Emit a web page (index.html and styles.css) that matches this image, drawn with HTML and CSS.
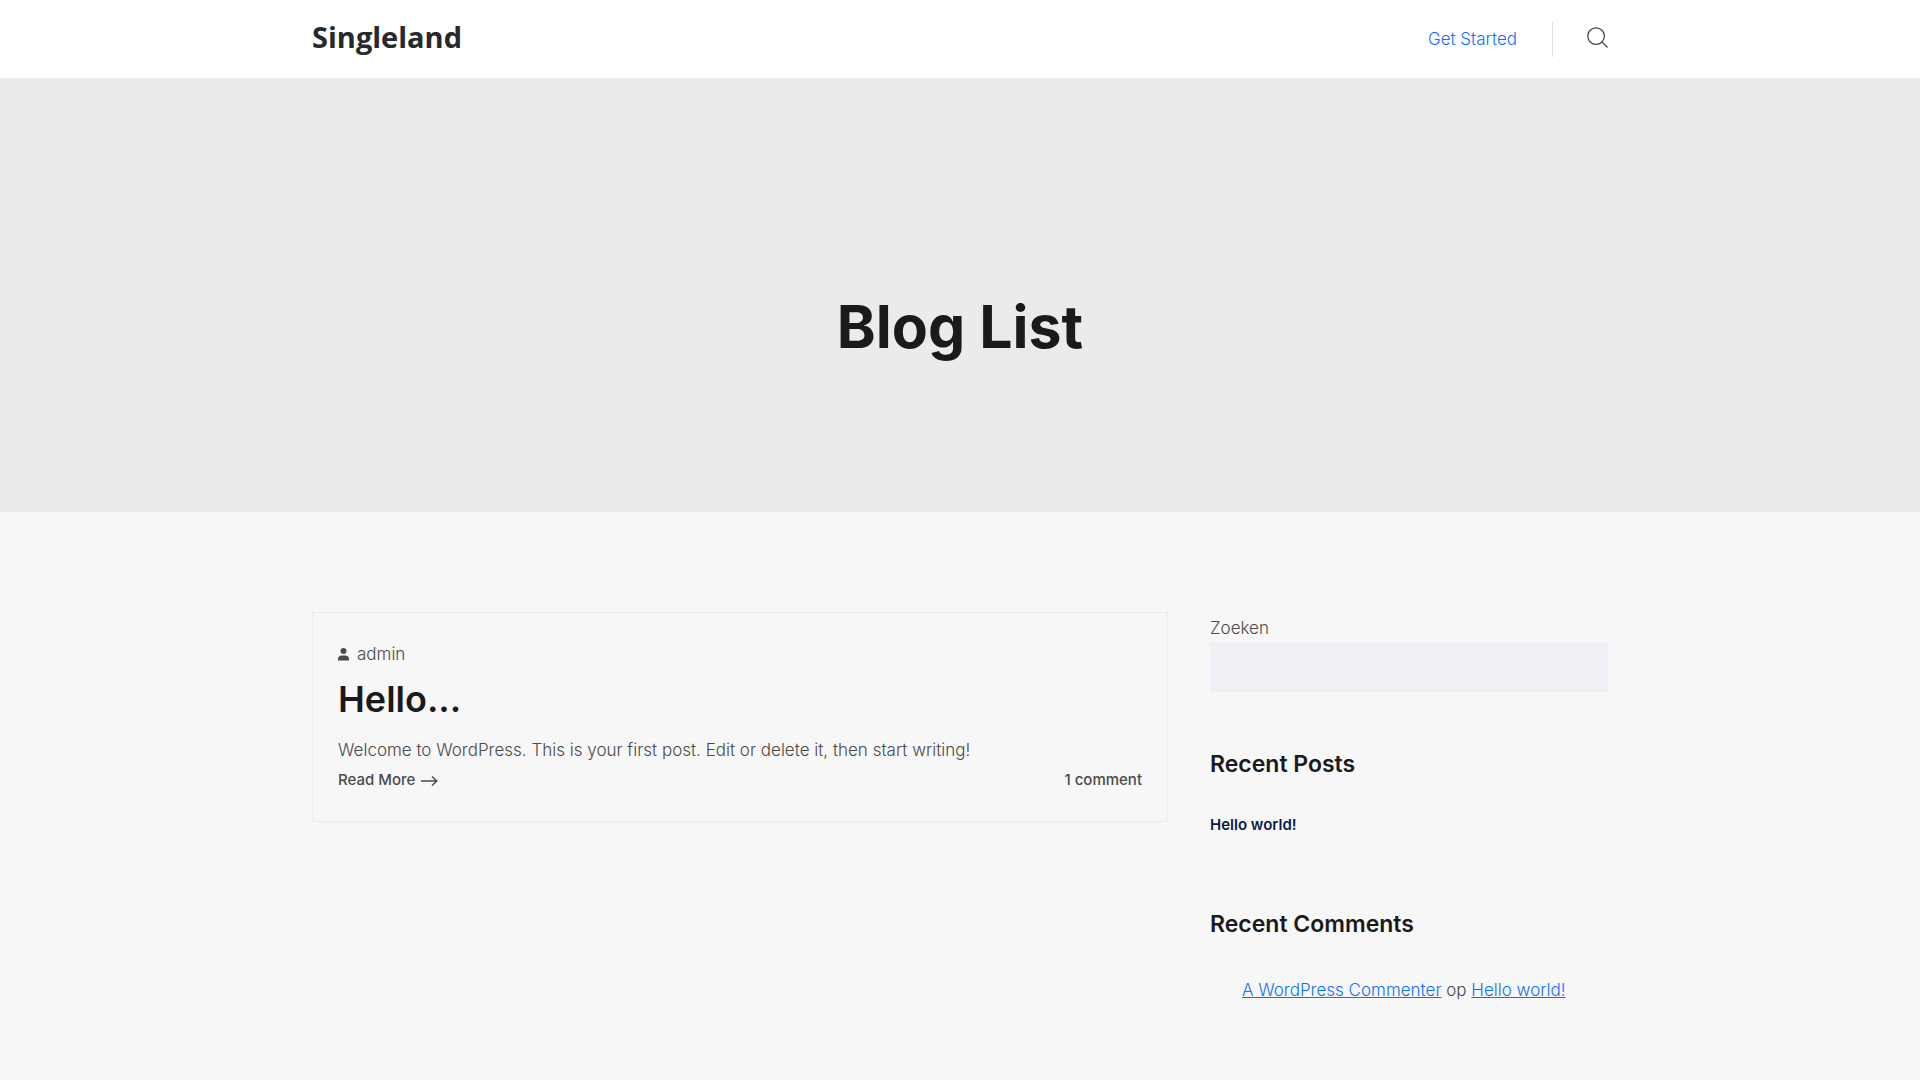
FILE: index.html
```html
<!DOCTYPE html>
<html lang="nl">
<head>
<meta charset="utf-8">
<meta name="viewport" content="width=device-width, initial-scale=1">
<title>Blog List – Singleland</title>
<link rel="stylesheet" href="styles.css">
</head>
<body>
<header class="site-header">
  <div class="container header-row">
    <a class="logo" href="#">Singleland</a>
    <nav class="header-nav">
      <a class="get-started" href="#">Get Started</a>
      <button class="search-toggle" type="button" aria-label="Search">
        <svg class="search-icon" viewBox="0 0 22 22" fill="none" stroke="currentColor" stroke-width="1.3" aria-hidden="true"><circle cx="9.5" cy="9.5" r="8.7"/><path d="M15.6 15.6 21.500 21.500"/></svg>
      </button>
    </nav>
  </div>
</header>
<section class="banner">
  <h1 class="banner-title">Blog List</h1>
</section>
<main class="container content">
  <article class="post">
    <p class="post-author">
      <svg class="user-icon" viewBox="0 0 11 13" fill="currentColor" aria-hidden="true"><circle cx="5.5" cy="3" r="3"/><path d="M0 12.5V11C0 8.8 1.6 7.4 3.6 7.4h3.8C9.4 7.4 11 8.8 11 11v1.500z"/></svg>
      <span>admin</span>
    </p>
    <h2 class="post-title">Hello...</h2>
    <p class="post-text">Welcome to WordPress. This is your first post. Edit or delete it, then start writing!</p>
    <div class="post-footer">
      <a class="post-link" href="#">Read More
        <svg class="arrow-icon" viewBox="0 0 17 12" fill="none" stroke="currentColor" stroke-width="1.5" aria-hidden="true"><path d="M0 6h16M11 1.500 15.800 6 11 10.500"/></svg></a>
      <a class="post-link" href="#">1 comment</a>
    </div>
  </article>
  <aside class="sidebar">
    <form class="search-widget" role="search">
      <label for="search">Zoeken</label>
      <input class="search-input" id="search" type="search">
    </form>
    <section class="widget">
      <h2 class="widget-title">Recent Posts</h2>
      <a class="recent-post" href="#">Hello world!</a>
    </section>
    <section class="widget">
      <h2 class="widget-title">Recent Comments</h2>
      <ul class="comments">
        <li><a class="text-link" href="#">A WordPress Commenter</a> op <a class="text-link" href="#">Hello world!</a></li>
      </ul>
    </section>
  </aside>
</main>
</body>
</html>
```

FILE: styles.css
```css
*, *::before, *::after { box-sizing: border-box; }
body {
  margin: 0;
  background: #f7f7f7;
  color: #4a4a4a;
  font-family: Inter, "Open Sans", sans-serif;
  font-size: 17px;
  font-weight: 300;
  line-height: 28px;
}
h1, h2, p, ul { margin: 0; padding: 0; }
a { color: inherit; text-decoration: none; }
.container {
  width: 100%;
  max-width: 1320px;
  margin: 0 auto;
  padding: 0 12px;
}
.site-header { background: #fff; }
.header-row {
  display: flex;
  align-items: center;
  justify-content: space-between;
  min-height: 78px;
}
.logo {
  padding-bottom: 4px;
  color: #262a2a;
  font-family: "Open Sans", sans-serif;
  font-size: 29px;
  font-weight: 700;
  line-height: 38px;
}
.header-nav { display: flex; align-items: center; }
.get-started { color: #0f6fff; padding-right: 35px; }
.search-toggle {
  height: 35px;
  padding: 0 0 4px 34px;
  border: 0;
  border-left: 1px solid #e0e0e0;
  background: none;
  color: #444;
  cursor: pointer;
}
.search-icon { display: block; width: 21px; height: 21px; }
.banner {
  padding: 208px 12px 144px;
  background: #ebebeb;
  text-align: center;
}
.banner-title { color: #1a1a1a; font-size: 59px; font-weight: 700; line-height: 82px; }
.content {
  display: grid;
  grid-template-columns: minmax(0, 856fr) minmax(0, 398fr);
  align-items: start;
  gap: 42px;
  padding-top: 100px;
  padding-bottom: 75px;
}
.post { padding: 27px 25px; border: 1px solid #ececec; }
.post-author { display: flex; align-items: center; gap: 8px; }
.user-icon { width: 11px; height: 13px; }
.post-title { padding: 8px 0 14px; color: #1a1a1a; font-size: 36px; font-weight: 600; line-height: 46px; }
.post-footer { display: flex; justify-content: space-between; gap: 20px; padding-top: 2px; }
.post-link { font-size: 15px; font-weight: 500; }
.arrow-icon { width: 17px; height: 12px; margin-left: 2px; vertical-align: -2px; }
.search-widget { display: grid; padding-top: 2px; }
.search-input {
  width: 100%;
  height: 50px;
  padding: 0 16px;
  border: 0;
  border-radius: 0;
  background: #f0eff5;
  font: inherit;
}
.widget { padding-top: 57px; }
.widget + .widget { padding-top: 70px; }
.widget-title { padding-bottom: 32px; color: #1a1a1a; font-size: 23px; font-weight: 600; line-height: 30px; }
.recent-post { display: block; color: #0b1a43; font-size: 15px; font-weight: 600; }
.comments { padding: 5px 0 0 32px; list-style: none; }
.text-link { color: #0f6fff; text-decoration: underline; }
```
